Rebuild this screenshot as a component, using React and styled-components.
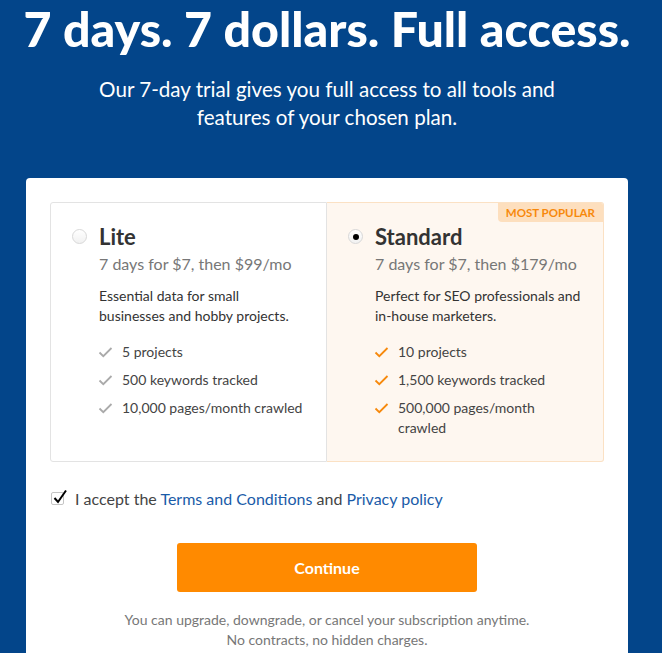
import React, { useState } from "react";
import styled, { createGlobalStyle } from "styled-components";

const GlobalStyle = createGlobalStyle`
  body {
    margin: 0;
    background: #03458a;
    font-family: Lato, "Open Sans", sans-serif;
  }
`;

const Page = styled.div`
  display: flex;
  flex-direction: column;
  align-items: center;
  width: 654px;
  box-sizing: border-box;
  padding: 0 26px;
`;

const Headline = styled.h1`
  margin: 0;
  color: #fff;
  font-size: 48.3px;
  line-height: 1.2;
  font-weight: 900;
  text-align: center;
  white-space: nowrap;
`;

const Lead = styled.p`
  margin: 17px 0 0;
  max-width: 480px;
  color: #fff;
  font-size: 20.6px;
  line-height: 28px;
  text-align: center;
`;

const Card = styled.div`
  margin-top: 47px;
  width: 100%;
  box-sizing: border-box;
  background: #fff;
  border-radius: 4px 4px 0 0;
  padding: 24px 24px 40px;
`;

const Plans = styled.div`
  display: grid;
  grid-template-columns: 1fr 1fr;
`;

const Plan = styled.div`
  position: relative;
  padding: 20px 22px 23px 21px;
  border: 1px solid ${(p) => (p.$active ? "#fbe1c4" : "#e3e3e3")};
  background: ${(p) => (p.$active ? "#fef7f0" : "#fff")};
  border-radius: ${(p) => (p.$active ? "0 3px 3px 0" : "3px 0 0 3px")};
  border-left-width: ${(p) => (p.$active ? "0" : "1px")};
  cursor: pointer;
`;

const Badge = styled.span`
  position: absolute;
  top: 0;
  right: 0;
  padding: 0 8px;
  height: 19px;
  line-height: 19px;
  background: #fddfbe;
  color: #f7890c;
  font-size: 11.5px;
  font-weight: 700;
  text-transform: uppercase;
  border-radius: 0 2px 0 4px;
`;

const PlanHead = styled.div`
  display: flex;
  align-items: center;
  gap: 12px;
`;

const Radio = styled.span`
  width: 15px;
  height: 15px;
  box-sizing: border-box;
  border-radius: 50%;
  border: 1px solid #d8d8d8;
  background: linear-gradient(#fff, #f1f1f1);
  display: flex;
  align-items: center;
  justify-content: center;

  &::after {
    content: "";
    width: 6px;
    height: 6px;
    border-radius: 50%;
    background: ${(p) => (p.$checked ? "#000" : "transparent")};
  }
`;

const PlanName = styled.h3`
  margin: 0;
  font-size: 22px;
  line-height: 28px;
  font-weight: 700;
  color: #333;
`;

const Body = styled.div`
  padding-left: 27px;
`;

const Price = styled.div`
  margin-top: 2px;
  font-size: 16px;
  line-height: 22px;
  color: #777;
  white-space: nowrap;
`;

const Desc = styled.p`
  margin: 11px 0 0;
  font-size: 14px;
  line-height: 20px;
  color: #333;
`;

const Features = styled.ul`
  list-style: none;
  margin: 16px 0 0;
  padding: 0;
  display: flex;
  flex-direction: column;
  gap: 8px;
`;

const Feature = styled.li`
  display: flex;
  align-items: flex-start;
  gap: 9px;
  font-size: 14px;
  line-height: 20px;
  color: #444;

  svg {
    flex: none;
    margin-top: 3px;
    margin-left: -1px;
  }
`;

const Agree = styled.label`
  display: flex;
  align-items: center;
  gap: 11px;
  margin-top: 26px;
  padding-left: 1px;
  font-size: 16px;
  line-height: 22px;
  color: #444;
  cursor: pointer;
`;

const Box = styled.span`
  position: relative;
  width: 13px;
  height: 13px;
  box-sizing: border-box;
  border: 1px solid #c4c4c4;
  border-radius: 2px;
  background: #fff;

  svg {
    position: absolute;
    left: 0;
    top: -4px;
  }
`;

const Link = styled.a`
  color: #1a5ba8;
  text-decoration: none;
`;

const Continue = styled.button`
  display: block;
  margin: 33px auto 0;
  width: 300px;
  height: 49px;
  border: 0;
  border-radius: 3px;
  background: #ff8a00;
  color: #fff;
  font-family: inherit;
  font-size: 16px;
  font-weight: 700;
  cursor: pointer;
`;

const Note = styled.p`
  margin: 18px 0 0;
  text-align: center;
  font-size: 14px;
  line-height: 20px;
  color: #777;
`;

const Check = ({ color }) => (
  <svg width="15" height="14" viewBox="0 0 15 14" fill="none">
    <path d="M1.5 7.5l3.8 3.7L13.5 3" stroke={color} strokeWidth="1.8" />
  </svg>
);

const plans = [
  {
    id: "lite",
    name: "Lite",
    price: "7 days for $7, then $99/mo",
    desc: "Essential data for small businesses and hobby projects.",
    features: ["5 projects", "500 keywords tracked", "10,000 pages/month crawled"],
  },
  {
    id: "standard",
    name: "Standard",
    price: "7 days for $7, then $179/mo",
    desc: "Perfect for SEO professionals and in-house marketers.",
    features: ["10 projects", "1,500 keywords tracked", "500,000 pages/month crawled"],
    popular: true,
  },
];

export default function App() {
  const [selected, setSelected] = useState("standard");
  const [accepted, setAccepted] = useState(true);

  return (
    <Page>
      <GlobalStyle />
      <Headline>7 days. 7 dollars. Full access.</Headline>
      <Lead>
        Our 7-day trial gives you full access to all tools and features of your chosen plan.
      </Lead>
      <Card>
        <Plans>
          {plans.map((plan) => {
            const active = plan.id === selected;
            return (
              <Plan key={plan.id} $active={active} onClick={() => setSelected(plan.id)}>
                {plan.popular && <Badge>Most popular</Badge>}
                <PlanHead>
                  <Radio $checked={active} />
                  <PlanName>{plan.name}</PlanName>
                </PlanHead>
                <Body>
                  <Price>{plan.price}</Price>
                  <Desc>{plan.desc}</Desc>
                  <Features>
                    {plan.features.map((f) => (
                      <Feature key={f}>
                        <Check color={active ? "#f7890c" : "#aaa"} />
                        <span>{f}</span>
                      </Feature>
                    ))}
                  </Features>
                </Body>
              </Plan>
            );
          })}
        </Plans>
        <Agree onClick={() => setAccepted(!accepted)}>
          <Box>
            {accepted && (
              <svg width="16" height="16" viewBox="0 0 16 16" fill="none">
                <path d="M2.5 9l3.5 4L14 1.5" stroke="#000" strokeWidth="2" />
              </svg>
            )}
          </Box>
          <span>
            I accept the <Link href="#">Terms and Conditions</Link> and{" "}
            <Link href="#">Privacy policy</Link>
          </span>
        </Agree>
        <Continue>Continue</Continue>
        <Note>
          You can upgrade, downgrade, or cancel your subscription anytime.
          <br />
          No contracts, no hidden charges.
        </Note>
      </Card>
    </Page>
  );
}
